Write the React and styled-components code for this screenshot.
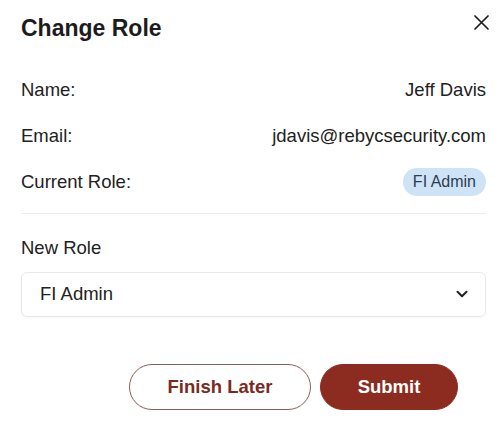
import React from "react";
import styled, { createGlobalStyle } from "styled-components";

const GlobalStyle = createGlobalStyle`
  body {
    margin: 0;
    background: #fff;
    font-family: "Liberation Sans", Arial, sans-serif;
    color: #222;
  }
`;

const Dialog = styled.div`
  width: 500px;
  height: 433px;
  box-sizing: border-box;
  padding: 14px 14px 0 21px;
  background: #fff;
`;

const Header = styled.div`
  display: flex;
  justify-content: space-between;
  align-items: flex-start;
  height: 28px;
`;

const Title = styled.h2`
  margin: 0;
  font-size: 23px;
  line-height: 28px;
  font-weight: 700;
  color: #1c1c1c;
`;

const CloseButton = styled.button`
  display: flex;
  align-items: center;
  justify-content: center;
  width: 18px;
  height: 18px;
  margin: -1px -4px 0 0;
  padding: 0;
  border: none;
  background: none;
  color: #1c1c1c;
  cursor: pointer;
`;

const Details = styled.div`
  display: flex;
  flex-direction: column;
  gap: 18px;
  margin-top: 33.5px;
  padding-bottom: 17px;
  border-bottom: 1px solid #ececec;
`;

const Row = styled.div`
  display: flex;
  justify-content: space-between;
  align-items: center;
  height: 28px;
  font-size: 18.5px;
  line-height: 22px;
  color: #222;
`;

const Badge = styled.span`
  display: inline-flex;
  align-items: center;
  height: 28px;
  padding: 0 10px;
  border-radius: 14px;
  background: #cfe3f7;
  color: #2c3d50;
  font-size: 16px;
`;

const Field = styled.div`
  display: flex;
  flex-direction: column;
  gap: 13px;
  margin-top: 23px;
`;

const Label = styled.label`
  font-size: 18.5px;
  line-height: 22px;
  color: #222;
`;

const Select = styled.div`
  display: flex;
  align-items: center;
  justify-content: space-between;
  height: 45px;
  box-sizing: border-box;
  padding: 0 17px 0 18px;
  border: 1px solid #e8e8e8;
  border-radius: 6px;
  font-size: 18.5px;
  color: #222;
  box-shadow: 0 1px 2px rgba(0, 0, 0, 0.03);
`;

const Footer = styled.div`
  display: flex;
  justify-content: flex-end;
  gap: 9px;
  margin-top: 47px;
  padding-right: 28px;
`;

const Button = styled.button`
  height: 46px;
  width: ${(p) => p.$width}px;
  box-sizing: border-box;
  border-radius: 23px;
  font-family: "Liberation Sans", Arial, sans-serif;
  font-size: 18.5px;
  font-weight: 700;
  cursor: pointer;
  border: 1px solid ${(p) => (p.$primary ? "#8c2b1f" : "#8a5d57")};
  background: ${(p) => (p.$primary ? "#8c2b1f" : "#fff")};
  color: ${(p) => (p.$primary ? "#fff" : "#7a2a20")};
`;

export default function App() {
  return (
    <>
      <GlobalStyle />
      <Dialog>
        <Header>
          <Title>Change Role</Title>
          <CloseButton aria-label="Close">
            <svg width="15" height="15" viewBox="0 0 15 15" fill="none">
              <path d="M1 1L14 14M14 1L1 14" stroke="currentColor" strokeWidth="1.7" strokeLinecap="round" />
            </svg>
          </CloseButton>
        </Header>
        <Details>
          <Row>
            <span>Name:</span>
            <span>Jeff Davis</span>
          </Row>
          <Row>
            <span>Email:</span>
            <span>jdavis@rebycsecurity.com</span>
          </Row>
          <Row>
            <span>Current Role:</span>
            <Badge>FI Admin</Badge>
          </Row>
        </Details>
        <Field>
          <Label>New Role</Label>
          <Select>
            <span>FI Admin</span>
            <svg width="12" height="8" viewBox="0 0 12 8" fill="none">
              <path d="M1.5 1.8L6 6.2L10.5 1.8" stroke="#222" strokeWidth="2" strokeLinecap="round" strokeLinejoin="round" />
            </svg>
          </Select>
        </Field>
        <Footer>
          <Button $width={182}>Finish Later</Button>
          <Button $primary $width={138}>Submit</Button>
        </Footer>
      </Dialog>
    </>
  );
}
